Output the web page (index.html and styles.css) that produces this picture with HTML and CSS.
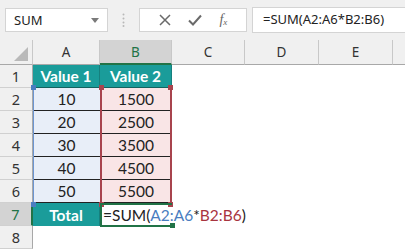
FILE: index.html
```html
<!DOCTYPE html>
<html lang="en">
<head>
  <meta charset="UTF-8">
  <title>SUM formula</title>
  <link rel="stylesheet" href="styles.css">
</head>
<body>
  <div class="toolbar">
    <div class="namebox">
      <span>SUM</span>
      <svg class="caret" width="8" height="5" viewBox="0 0 8 5"><path d="M0 0h8L4 5z" fill="#7a7a7a"/></svg>
    </div>
    <div class="grip">
      <svg width="3" height="14" viewBox="0 0 3 14"><circle cx="1.5" cy="1.5" r="1" fill="#b8b8b8"/><circle cx="1.5" cy="5.5" r="1" fill="#b8b8b8"/><circle cx="1.5" cy="9.5" r="1" fill="#b8b8b8"/><circle cx="1.5" cy="13" r="1" fill="#b8b8b8"/></svg>
    </div>
    <div class="fxbox">
      <svg width="12" height="12" viewBox="0 0 12 12"><path d="M1 1l10 10M11 1L1 11" stroke="#6a6a6a" stroke-width="1.5" fill="none"/></svg>
      <svg width="14" height="12" viewBox="0 0 14 12"><path d="M1 6.5l4 4L13 1.5" stroke="#6a6a6a" stroke-width="2" fill="none"/></svg>
      <span class="fx"><i>f</i><sub>x</sub></span>
    </div>
    <div class="formula">=SUM(A2:A6*B2:B6)</div>
  </div>

  <div class="sheet">
    <div class="corner"><svg width="14" height="14" viewBox="0 0 14 14"><path d="M14 0v14H0z" fill="#b9b9b9"/></svg></div>
    <div class="colhead">A</div>
    <div class="colhead sel">B</div>
    <div class="colhead">C</div>
    <div class="colhead">D</div>
    <div class="colhead">E</div>
    <div class="colhead last"></div>

    <div class="rowhead">1</div>
    <div class="cell head">Value 1</div>
    <div class="cell head">Value 2</div>

    <div class="rowhead">2</div>
    <div class="cell a">10</div>
    <div class="cell b">1500</div>

    <div class="rowhead">3</div>
    <div class="cell a">20</div>
    <div class="cell b">2500</div>

    <div class="rowhead">4</div>
    <div class="cell a">30</div>
    <div class="cell b">3500</div>

    <div class="rowhead">5</div>
    <div class="cell a">40</div>
    <div class="cell b">4500</div>

    <div class="rowhead">6</div>
    <div class="cell a">50</div>
    <div class="cell b">5500</div>

    <div class="rowhead sel">7</div>
    <div class="cell head total">Total</div>
    <div class="cell edit">=SUM(<span class="ra">A2:A6</span>*<span class="rb">B2:B6</span>)</div>

    <div class="rowhead">8</div>

    <!-- range highlights drawn over the grid -->
    <div class="ref ref-a"><i class="knob tl"></i><i class="knob bl"></i></div>
    <div class="ref ref-b"><i class="knob tl"></i><i class="knob tr"></i><i class="knob bl"></i><i class="knob br"></i></div>
    <div class="ref active"><i class="knob br"></i></div>
  </div>
</body>
</html>
```

FILE: styles.css
```css
/* page */
body {
  margin: 0;
  width: 405px;
  height: 250px;
  overflow: hidden;
  background: #fff;
  font-family: "Noto Sans", sans-serif;
}

/* formula bar */
.toolbar {
  display: flex;
  align-items: center;
  height: 40px;
  padding: 0 0 0 5px;
  background: #f0f0f0;
  box-sizing: border-box;
}
.namebox {
  display: flex;
  align-items: center;
  justify-content: space-between;
  width: 103px;
  height: 24px;
  padding: 0 8px 0 8px;
  box-sizing: border-box;
  background: #fff;
  border: 1px solid #d4d4d4;
  font-size: 13px;
  color: #222;
}
.grip {
  display: flex;
  justify-content: center;
  width: 31px;
}
.fxbox {
  display: flex;
  align-items: center;
  justify-content: space-around;
  width: 108px;
  height: 24px;
  padding: 0 10px;
  box-sizing: border-box;
  background: #fff;
  border: 1px solid #d4d4d4;
}
.fx {
  font-family: "Liberation Serif", serif;
  font-size: 14px;
  color: #666;
}
.fx sub {
  font-size: 9px;
  font-style: italic;
  vertical-align: -1px;
}
.formula {
  flex: 1;
  height: 24px;
  margin-left: 5px;
  padding-left: 10px;
  line-height: 23px;
  background: #fff;
  border: 1px solid #d4d4d4;
  border-right: 0;
  font-size: 13px;
  color: #222;
}

/* worksheet grid */
.sheet {
  position: relative;
  display: grid;
  grid-template-columns: 33px 67px 72px 73px 74px 74px 12px;
  grid-template-rows: 25px repeat(8, 23px);
  height: 210px;
  overflow: hidden;
}
.corner,
.colhead {
  display: flex;
  align-items: center;
  justify-content: center;
  background: #f0f0f0;
  border-right: 1px solid #c8c8c8;
  border-bottom: 1px solid #a8a8a8;
  font-size: 13.5px;
  color: #333;
}
.corner {
  justify-content: flex-end;
  align-items: flex-end;
  padding: 0 4px 3px 0;
}
.colhead.sel {
  background: #d3d3d3;
  border-bottom: 2px solid #217346;
  color: #217346;
}
.colhead.last {
  border-right: 0;
}
.rowhead {
  grid-column: 1;
  display: flex;
  align-items: center;
  justify-content: center;
  background: #f0f0f0;
  border-right: 1px solid #a8a8a8;
  border-bottom: 1px solid #d0d0d0;
  font-size: 14.5px;
  color: #333;
}
.rowhead.sel {
  background: #d3d3d3;
  border-right: 2px solid #217346;
  color: #217346;
}

.cell {
  display: flex;
  align-items: center;
  justify-content: center;
  font-family: Lato, "Liberation Sans", sans-serif;
  font-size: 15.5px;
  color: #222;
}
.cell.head {
  background: #1a9c9a;
  color: #fff;
  font-weight: bold;
  border-bottom: 1px solid #14625f;
  border-right: 1px solid #16807e;
}
.cell.a {
  background: #e8eef8;
  border-bottom: 1px solid #222;
}
.cell.b {
  background: #f9e5e6;
  border-bottom: 1px solid #222;
}
.cell.total {
  border-bottom: 0;
}
.cell.edit {
  justify-content: flex-start;
  padding-left: 3px;
  white-space: nowrap;
  overflow: visible;
}
.ra { color: #4a7dc0; }
.rb { color: #a8343f; }

/* range outlines */
.ref {
  position: absolute;
  box-sizing: border-box;
  pointer-events: none;
}
.ref-a {
  left: 33px;
  top: 48px;
  width: 68px;
  height: 116px;
  border-left: 1px solid #6c95d1;
}
.ref-a .knob { background: #4a7dc0; }
.ref-b {
  left: 100px;
  top: 48px;
  width: 72px;
  height: 116px;
  border: 2px solid #a8444e;
  border-top: 0;
  border-bottom: 0;
}
.ref-b .knob { background: #a8444e; }
.active {
  left: 100px;
  top: 163px;
  width: 72px;
  height: 24px;
  border: 2px solid #217346;
  border-right: 0;
}
.active .knob { background: #217346; }
.knob {
  position: absolute;
  width: 5px;
  height: 5px;
}
.knob.tl { left: -3px; top: -3px; }
.knob.tr { right: -3px; top: -3px; }
.knob.bl { left: -3px; bottom: -3px; }
.knob.br { right: -3px; bottom: -3px; }
```
